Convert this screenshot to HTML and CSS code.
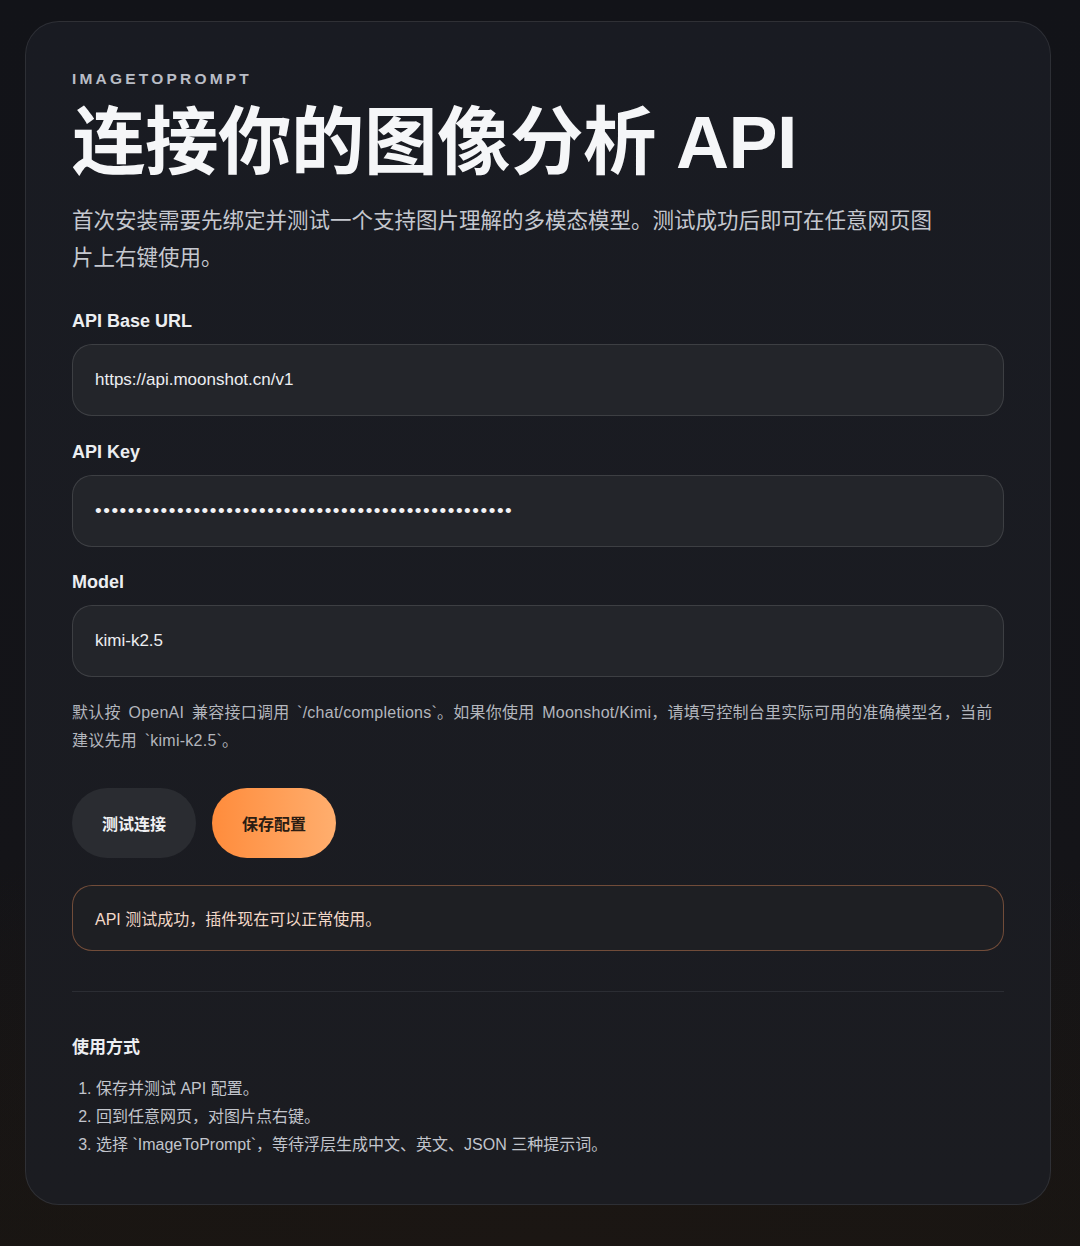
FILE: index.html
```html
<!DOCTYPE html>
<html lang="zh-CN">
<head>
<meta charset="utf-8">
<title>ImageToPrompt</title>
<link rel="stylesheet" href="styles.css">
</head>
<body>
<div class="page">
  <main class="card">
    <div class="eyebrow">IMAGETOPROMPT</div>
    <h1 class="title">连接你的图像分析 API</h1>
    <p class="lead">首次安装需要先绑定并测试一个支持图片理解的多模态模型。测试成功后即可在任意网页图片上右键使用。</p>

    <div class="field">
      <label class="label">API Base URL</label>
      <div class="input">https://api.moonshot.cn/v1</div>
    </div>
    <div class="field">
      <label class="label">API Key</label>
      <div class="input dots">•••••••••••••••••••••••••••••••••••••••••••••••••••</div>
    </div>
    <div class="field">
      <label class="label">Model</label>
      <div class="input">kimi-k2.5</div>
    </div>

    <p class="hint">默认按 OpenAI 兼容接口调用 `/chat/completions`。如果你使用 Moonshot/Kimi，请填写控制台里实际可用的准确模型名，当前建议先用 `kimi-k2.5`。</p>

    <div class="actions">
      <button class="btn btn-dark">测试连接</button>
      <button class="btn btn-orange">保存配置</button>
    </div>

    <div class="status">API 测试成功，插件现在可以正常使用。</div>

    <hr class="divider">

    <h2 class="subhead">使用方式</h2>
    <ol class="steps">
      <li>保存并测试 API 配置。</li>
      <li>回到任意网页，对图片点右键。</li>
      <li>选择 `ImageToPrompt`，等待浮层生成中文、英文、JSON 三种提示词。</li>
    </ol>
  </main>
</div>
</body>
</html>
```

FILE: styles.css
```css
* { box-sizing: border-box; }

html, body {
  margin: 0;
  height: 100%;
}

body {
  background:
    radial-gradient(ellipse 80% 40% at 50% 100%, #1b1613 0%, rgba(27,22,19,0) 100%),
    linear-gradient(180deg, #121318 0%, #141418 70%, #181512 100%);
  font-family: "Liberation Sans", "Noto Sans CJK SC", sans-serif;
  color: #e8e9ec;
}

.page {
  padding: 21px 29px 42px 25px;
}

.card {
  display: flex;
  flex-direction: column;
  background: linear-gradient(180deg, #191b22 0%, #1b1c21 100%);
  border: 1px solid rgba(255, 255, 255, 0.09);
  border-radius: 34px;
  padding: 48px 46px 45px 46px;
}

.eyebrow {
  font-size: 15.5px;
  line-height: 18px;
  letter-spacing: 3.2px;
  font-weight: 600;
  color: #b9bdc6;
}

.title {
  margin: 15px 0 0 0;
  font-size: 73.5px;
  line-height: 80px;
  font-weight: 700;
  color: #f5f6f8;
  letter-spacing: -0.5px;
}

.lead {
  margin: 20px 0 0 0;
  max-width: 880px;
  font-size: 21.5px;
  line-height: 37px;
  color: #c5c8cf;
}

.field {
  display: flex;
  flex-direction: column;
  gap: 12px;
}

.lead + .field { margin-top: 33px; }
.field + .field { margin-top: 24.5px; }

.label {
  font-size: 18px;
  line-height: 22px;
  font-weight: 600;
  color: #eceef1;
}

.input {
  height: 72px;
  display: flex;
  align-items: center;
  padding: 0 22px;
  background: #23252a;
  border: 1px solid rgba(255, 255, 255, 0.12);
  border-radius: 20px;
  font-size: 17px;
  color: #eceef1;
}

.input.dots {
  font-size: 19px;
  letter-spacing: 1.55px;
  color: #f2f3f5;
}

.hint {
  margin: 22px 0 0 0;
  font-size: 16px;
  line-height: 28px;
  letter-spacing: 0.25px;
  word-spacing: 3px;
  color: #b3b6bd;
}

.actions {
  display: flex;
  gap: 16px;
  margin-top: 33px;
}

.btn {
  width: 124px;
  height: 70px;
  border: none;
  border-radius: 35px;
  font-family: "Liberation Sans", "Noto Sans CJK SC", sans-serif;
  font-size: 16px;
  font-weight: 700;
}

.btn-dark {
  background: #2a2c31;
  color: #f0f1f3;
}

.btn-orange {
  background: linear-gradient(90deg, #ff8c3c 0%, #ffae6e 100%);
  color: #2b1c12;
}

.status {
  margin-top: 27px;
  height: 66px;
  display: flex;
  align-items: center;
  padding: 0 22px;
  border: 1px solid rgba(214, 130, 85, 0.45);
  border-radius: 20px;
  background: #1e1f23;
  font-size: 16px;
  color: #f2d8c8;
}

.divider {
  margin: 40px 0 0 0;
  border: none;
  height: 1px;
  background: #2b2d33;
}

.subhead {
  margin: 44px 0 0 0;
  font-size: 17px;
  line-height: 24px;
  font-weight: 700;
  color: #eceef1;
}

.steps {
  margin: 15px 0 0 0;
  padding-left: 24px;
  font-size: 16px;
  line-height: 28px;
  color: #c2c5cc;
}
```
